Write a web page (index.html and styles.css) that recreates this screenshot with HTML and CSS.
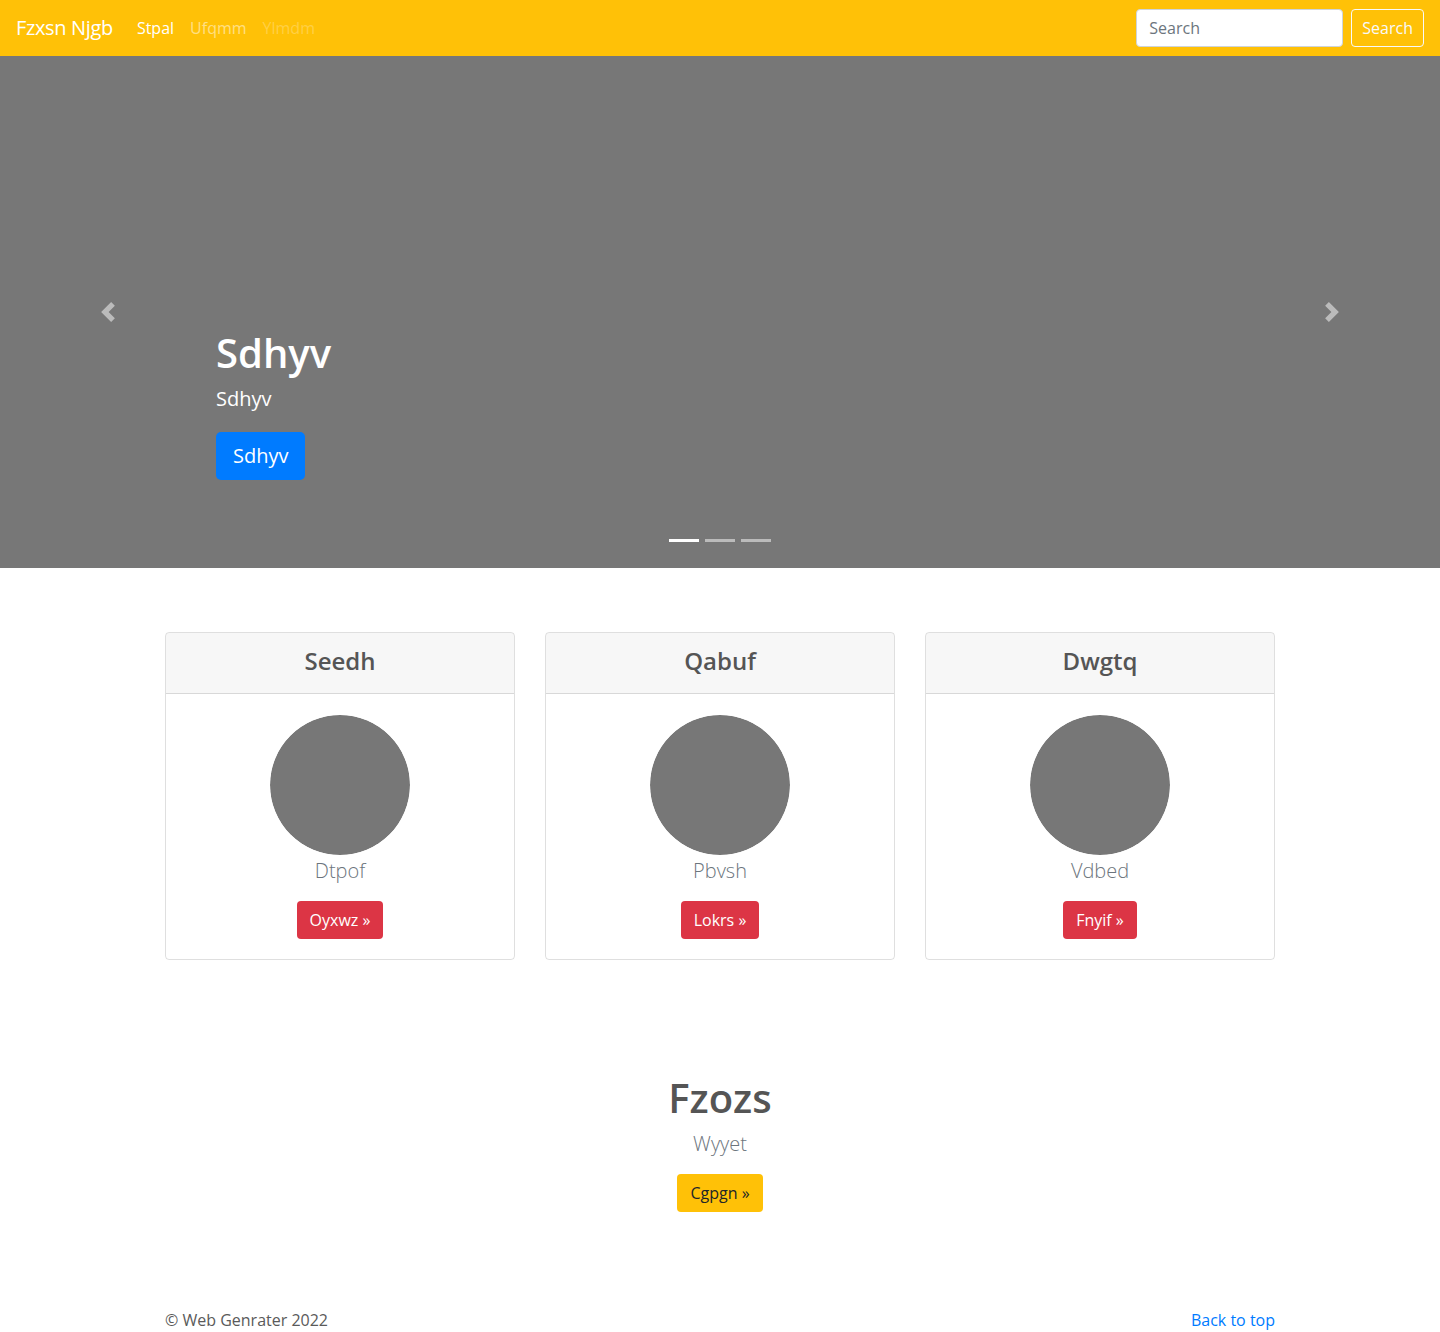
FILE: index.html
```html
<!DOCTYPE html>
<html lang="en">
<head>
<meta charset="utf-8">
<title>Fzxsn Njgb</title>
<link rel="stylesheet" href="styles.css">
</head>
<body>
<header class="navbar">
  <a class="brand" href="#">Fzxsn Njgb</a>
  <nav class="nav">
    <a class="nav-link active" href="#">Stpal</a>
    <a class="nav-link" href="#">Ufqmm</a>
    <a class="nav-link disabled" href="#">Ylmdm</a>
  </nav>
  <form class="search">
    <input class="search-input" type="text" placeholder="Search">
    <button class="btn btn-outline-light" type="button">Search</button>
  </form>
</header>

<main>
  <section class="carousel">
    <div class="carousel-inner">
      <div class="carousel-caption">
        <h1 class="caption-title">Sdhyv</h1>
        <p class="caption-text">Sdhyv</p>
        <p class="caption-action"><a class="btn btn-lg btn-primary" href="#">Sdhyv</a></p>
      </div>
    </div>
    <a class="carousel-control prev" href="#">
      <svg width="20" height="20" viewBox="0 0 8 8"><path fill="#fff" d="M5.25 0l-4 4 4 4 1.5-1.5L4.25 4l2.5-2.5L5.25 0z"/></svg>
    </a>
    <a class="carousel-control next" href="#">
      <svg width="20" height="20" viewBox="0 0 8 8"><path fill="#fff" d="M2.75 0l-1.5 1.5L3.75 4l-2.5 2.5L2.75 8l4-4-4-4z"/></svg>
    </a>
    <ol class="indicators">
      <li class="active"></li>
      <li></li>
      <li></li>
    </ol>
  </section>

  <div class="container">
    <div class="cards">
      <div class="card">
        <div class="card-header"><h4 class="card-title">Seedh</h4></div>
        <div class="card-body">
          <svg class="avatar" width="140" height="140" viewBox="0 0 140 140"><circle cx="70" cy="70" r="70" fill="#777"/></svg>
          <p class="lead card-lead">Dtpof</p>
          <a class="btn btn-danger" href="#">Oyxwz »</a>
        </div>
      </div>
      <div class="card">
        <div class="card-header"><h4 class="card-title">Qabuf</h4></div>
        <div class="card-body">
          <svg class="avatar" width="140" height="140" viewBox="0 0 140 140"><circle cx="70" cy="70" r="70" fill="#777"/></svg>
          <p class="lead card-lead">Pbvsh</p>
          <a class="btn btn-danger" href="#">Lokrs »</a>
        </div>
      </div>
      <div class="card">
        <div class="card-header"><h4 class="card-title">Dwgtq</h4></div>
        <div class="card-body">
          <svg class="avatar" width="140" height="140" viewBox="0 0 140 140"><circle cx="70" cy="70" r="70" fill="#777"/></svg>
          <p class="lead card-lead">Vdbed</p>
          <a class="btn btn-danger" href="#">Fnyif »</a>
        </div>
      </div>
    </div>

    <section class="feature">
      <h1 class="feature-title">Fzozs</h1>
      <p class="lead feature-lead">Wyyet</p>
      <a class="btn btn-warning" href="#">Cgpgn »</a>
    </section>

    <footer class="footer">
      <p class="copy">© Web Genrater 2022</p>
      <a class="back" href="#">Back to top</a>
    </footer>
  </div>
</main>
</body>
</html>
```

FILE: styles.css
```css
* { box-sizing: border-box; }

html, body {
  margin: 0;
  padding: 0;
}

body {
  font-family: "Open Sans", "Noto Sans", sans-serif;
  font-size: 16px;
  line-height: 1.5;
  color: #5a5a5a;
  background: #fff;
}

a { text-decoration: none; }

/* Navbar */
.navbar {
  height: 56px;
  background: #ffc107;
  display: flex;
  align-items: center;
  padding: 8px 16px;
}

.brand {
  color: #fff;
  font-size: 20px;
  line-height: 30px;
  margin-right: 16px;
  white-space: nowrap;
  letter-spacing: -0.35px;
}

.nav {
  display: flex;
  flex: 1;
}

.nav-link {
  padding: 8px;
  font-size: 16px;
  color: rgba(255, 255, 255, 0.5);
}

.nav-link.active { color: #fff; }
.nav-link.disabled { color: rgba(255, 255, 255, 0.25); }

.search {
  display: flex;
  align-items: center;
}

.search-input {
  width: 207px;
  height: 38px;
  padding: 6px 12px;
  margin-right: 8px;
  font-family: inherit;
  font-size: 16px;
  color: #495057;
  background: #fff;
  border: 1px solid #ced4da;
  border-radius: 4px;
}

.search-input::placeholder { color: #6c757d; }

/* Buttons */
.btn {
  display: inline-block;
  font-family: inherit;
  font-size: 16px;
  line-height: 24px;
  padding: 6px 12px;
  border: 1px solid transparent;
  border-radius: 4px;
  cursor: pointer;
  vertical-align: middle;
}

.btn-outline-light {
  background: transparent;
  color: #f8f9fa;
  border-color: #f8f9fa;
  padding: 6px 10px;
}

.btn-lg {
  font-size: 20px;
  line-height: 30px;
  padding: 8px 16px;
  border-radius: 5px;
}

.btn-primary { background: #007bff; color: #fff; }
.btn-danger { background: #dc3545; color: #fff; }
.btn-warning { background: #ffc107; color: #212529; }

/* Carousel */
.carousel {
  position: relative;
  height: 512px;
  background: #777;
  margin-bottom: 64px;
}

.carousel-inner {
  height: 100%;
}

.carousel-caption {
  position: absolute;
  left: 15%;
  right: 15%;
  bottom: 48px;
  padding: 20px 0;
  color: #fff;
  text-align: left;
  z-index: 10;
}

.caption-title {
  font-size: 40px;
  font-weight: 600;
  line-height: 48px;
  margin: 0 0 7px;
}

.caption-text {
  font-size: 20px;
  line-height: 30px;
  margin: 0 0 18px;
}

.caption-action {
  margin: 0 0 20px;
  line-height: 1;
}

.carousel-control {
  position: absolute;
  top: 0;
  bottom: 0;
  width: 15%;
  display: flex;
  align-items: center;
  justify-content: center;
  opacity: 0.5;
}

.carousel-control.prev { left: 0; }
.carousel-control.next { right: 0; }

.indicators {
  position: absolute;
  left: 0;
  right: 0;
  bottom: 10px;
  display: flex;
  justify-content: center;
  list-style: none;
  margin: 0 15%;
  padding: 0;
}

.indicators li {
  width: 30px;
  height: 3px;
  margin: 10px 3px 16px;
  background: #fff;
  opacity: 0.5;
}

.indicators li.active { opacity: 1; }

/* Container */
.container {
  width: 1140px;
  margin: 0 auto;
  padding: 0 15px;
}

.cards {
  display: grid;
  grid-template-columns: repeat(3, 1fr);
  gap: 30px;
}

.card {
  border: 1px solid rgba(0, 0, 0, 0.125);
  border-radius: 4px;
  text-align: center;
  overflow: hidden;
}

.card-header {
  background: rgba(0, 0, 0, 0.03);
  border-bottom: 1px solid rgba(0, 0, 0, 0.125);
  padding: 10px 20px 14px;
}

.card-title {
  margin: 0;
  font-size: 24px;
  font-weight: 600;
  line-height: 36px;
  color: #555;
}

.card-body {
  padding: 21px 20px 20px;
  display: flex;
  flex-direction: column;
  align-items: center;
}

.avatar {
  display: block;
  border-radius: 50%;
}

.lead {
  font-size: 20px;
  font-weight: 300;
  line-height: 30px;
}

.card-lead {
  margin: 1px 0 15px;
  color: #6c757d;
}

/* Feature */
.feature {
  text-align: center;
  padding-top: 114px;
}

.feature-title {
  margin: 0 0 7px;
  font-size: 40px;
  font-weight: 600;
  line-height: 48px;
  color: #555;
}

.feature-lead {
  margin: 0 0 15px;
  color: #6c757d;
}

/* Footer */
.footer {
  display: flex;
  justify-content: space-between;
  padding-top: 96px;
  padding-bottom: 24px;
}

.copy {
  margin: 0;
  color: #5a5a5a;
}

.back {
  color: #007bff;
}
```
